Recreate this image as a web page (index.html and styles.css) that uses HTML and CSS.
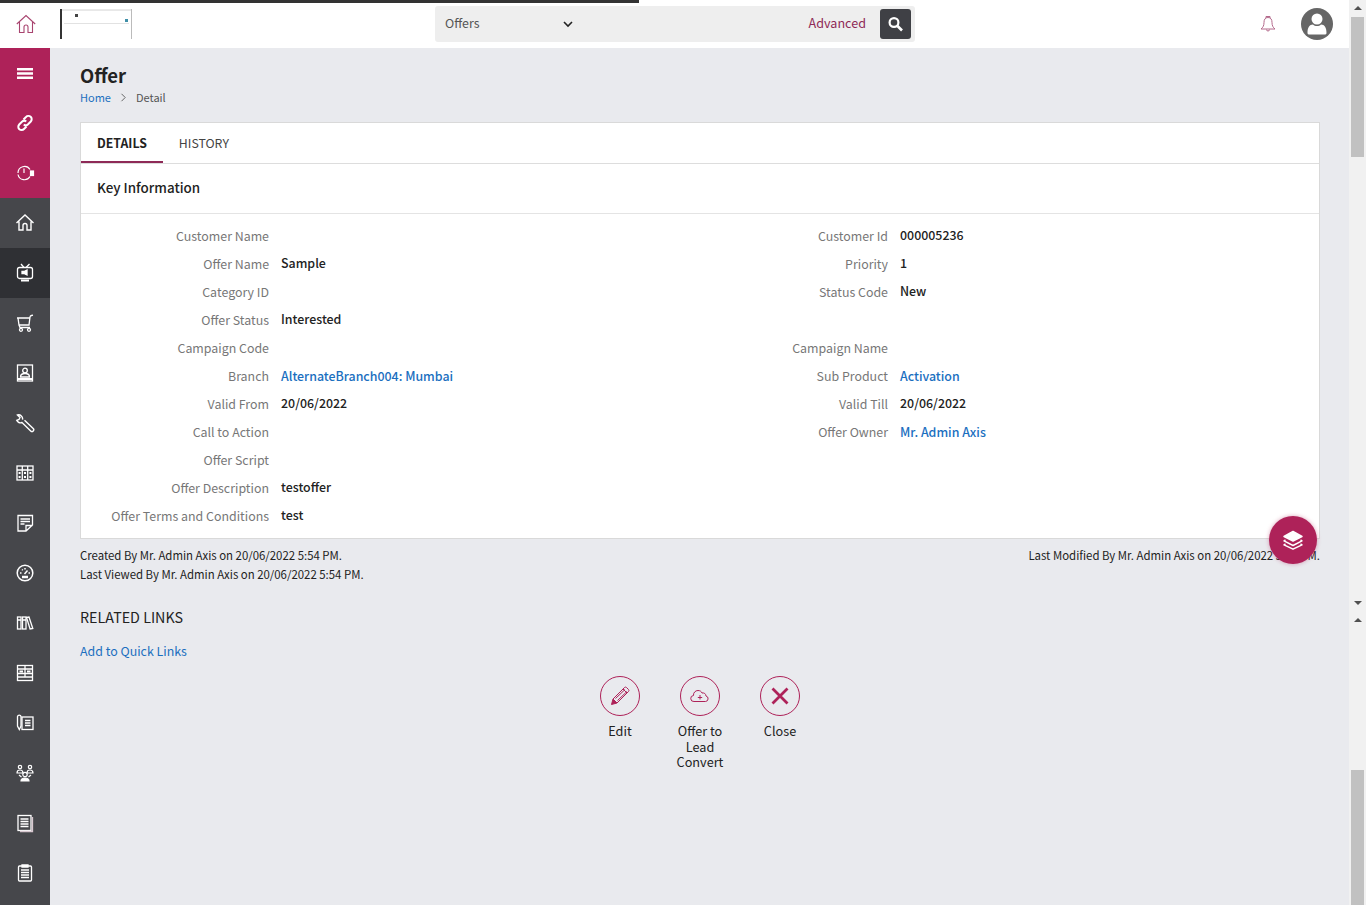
FILE: index.html
```html
<!DOCTYPE html>
<html lang="en">
<head>
  <meta charset="UTF-8" />
  <title>Offer</title>
  <link rel="stylesheet" href="styles.css">
</head>
<body>
  <div class="page">
    <div class="window">
      <header class="topbar">
        <div class="progress"></div>
        <a class="home-link">
          <svg width="20" height="20" viewBox="0 0 20 20" fill="none" stroke="#a8446f" stroke-width="1.100"><path d="M.8 10 10 1.500 19.200 10M3.500 8v10.500h4.500v-5.500a2 2 0 0 1 4 0v5.500h4.500V8"/></svg>
        </a>
        <div class="thumb"><span class="thumb-top"></span><span class="thumb-dot"></span><span class="thumb-line"></span><span class="thumb-mark"></span></div>
        <div class="search">
          <div class="search-select">
            <span class="search-text">Offers</span>
            <svg width="10" height="7" viewBox="0 0 10 7" fill="none" stroke="#222" stroke-width="1.600"><path d="M1 1l4 4 4-4"/></svg>
          </div>
          <a class="search-adv search-text">Advanced</a>
          <button class="search-btn">
            <svg width="16" height="16" viewBox="0 0 16 16" fill="none" stroke="#fff" stroke-width="2.200"><circle cx="6" cy="6.500" r="4.400"/><path d="M9.500 10l4.500 4.500" stroke-width="2.600"/></svg>
          </button>
        </div>
        <svg class="bell" width="16" height="18" viewBox="0 0 16 18" fill="none" stroke="#b46a8c" stroke-width="1"><path d="M6 3V1.500h4V3M8 2.500c-3 0-4 2.200-4 5 0 3-1 5-3 6.500h14c-2-1.500-3-3.500-3-6.500 0-2.800-1-5-4-5zM6.500 14.500a1.500 1.500 0 0 0 3 0"/></svg>
        <svg class="avatar" width="32" height="32" viewBox="0 0 32 32"><circle cx="16" cy="16" r="16" fill="#666"/><circle cx="16" cy="11" r="5.500" fill="#fff"/><path d="M6.500 25c0-5.500 2-8.500 5.500-8.500 1 1 2.500 1.500 4 1.500s3-.5 4-1.500c3.500 0 5.500 3 5.500 8.500 0 1-1 1.500-2 1.500H8.500c-1 0-2-.5-2-1.500z" fill="#fff"/></svg>
      </header>

      <div class="body-row">
        <nav class="sidebar">
          <a class="nav-item pink"><svg width="20" height="20" viewBox="0 0 20 20" fill="#fff"><rect x="2" y="5" width="16" height="2.500"/><rect x="2" y="9.250" width="16" height="2.500"/><rect x="2" y="13.500" width="16" height="2.500"/></svg></a>
          <a class="nav-item pink"><svg width="20" height="20" viewBox="0 0 20 20" fill="none" stroke="#fff" stroke-width="2"><path d="M8.500 6.500 11 4a3.200 3.200 0 0 1 4.800 4.500l-3 3a3 3 0 0 1-4 0"/><path d="M11.500 13.500 9 16a3.200 3.200 0 0 1-4.800-4.500l3-3a3 3 0 0 1 4 0"/></svg></a>
          <a class="nav-item pink"><svg width="20" height="20" viewBox="0 0 20 20" fill="none" stroke="#fff" stroke-width="1.200"><path d="M3 10a6.500 6.500 0 0 1 12-3.500M15 13.500a6.500 6.500 0 0 1-12-2"/><path d="M9 5.500V10"/><rect x="15.500" y="8" width="3" height="4.500" fill="#fff"/></svg></a>
          <a class="nav-item"><svg width="20" height="20" viewBox="0 0 20 20" fill="none" stroke="#fff" stroke-width="1.400"><path d="M1.500 10 10 2l8.500 8M4 8.500V17h4v-4.500a2 2 0 0 1 4 0V17h4V8.500"/></svg></a>
          <a class="nav-item active"><svg width="20" height="20" viewBox="0 0 20 20" fill="none" stroke="#fff" stroke-width="1.300"><path d="M6 1l3 3.500M14.500 1 11 4.500"/><rect x="2.500" y="4.500" width="15" height="11" rx="2"/><path d="M7 8.500h2l3-1.500v5L9 10.500H7z" fill="#fff"/><path d="M6 17.500h8" stroke-width="2"/></svg></a>
          <a class="nav-item"><svg width="20" height="20" viewBox="0 0 20 20" fill="none" stroke="#fff" stroke-width="1.300"><path d="M2 5h12.500M3 5l1 7h10l1-8c.1-.8.700-1.300 1.500-1.500l1.500-.3M4 12l1 2.500h10"/><circle cx="6" cy="16.800" r="1.500"/><circle cx="14" cy="16.800" r="1.500"/></svg></a>
          <a class="nav-item"><svg width="20" height="20" viewBox="0 0 20 20" fill="none" stroke="#fff" stroke-width="1.300"><rect x="2.500" y="2" width="15" height="16"/><circle cx="10" cy="7.500" r="2.300"/><path d="M5.500 14c0-2.500 2-3.500 4.500-3.500s4.500 1 4.500 3.500z"/><path d="M2.500 16h15" stroke-width="2"/></svg></a>
          <a class="nav-item"><svg width="20" height="20" viewBox="0 0 20 20" fill="none" stroke="#fff" stroke-width="1.400"><path d="M7.500 6.700a4 4 0 0 0-5-4.700l2.500 2.500-1 2-2.300.8A4 4 0 0 0 7 9.500l8.700 8.500a1.700 1.700 0 0 0 2.500-2.500L9.500 7.200"/></svg></a>
          <a class="nav-item"><svg width="20" height="20" viewBox="0 0 20 20" fill="none" stroke="#fff" stroke-width="1.300"><rect x="2" y="3" width="16" height="14"/><path d="M7.300 3v14M12.700 3v14M2 7h16"/><path d="M4.600 9v2M10 9v2M15.400 9v2M4.600 13v2M10 13v2M15.400 13v2" stroke-width="2"/></svg></a>
          <a class="nav-item"><svg width="20" height="20" viewBox="0 0 20 20" fill="none" stroke="#fff" stroke-width="1.300"><path d="M3 2.500h14.500V12L11 18H3zM11 18v-5.500h6.500"/><path d="M5.500 6h9.500M5.500 8.500h9.500M5.500 11h4"/></svg></a>
          <a class="nav-item"><svg width="20" height="20" viewBox="0 0 20 20" fill="none" stroke="#fff" stroke-width="1.500"><circle cx="10" cy="10" r="7.800"/><path d="M5 10h1.500M13.500 10H15M7 6.500l.8.8M10 5v1.500M9.500 11l3-3.500"/><path d="M7 14h6" stroke-width="2.500"/></svg></a>
          <a class="nav-item"><svg width="20" height="20" viewBox="0 0 20 20" fill="none" stroke="#fff" stroke-width="1.300"><rect x="2.500" y="4" width="3.500" height="12"/><rect x="7.500" y="4" width="3.500" height="12"/><path d="M11.500 4.500 14 4l3.800 11.500-2.700.5z"/><path d="M2.500 7h3.500M7.500 7h3.500"/></svg></a>
          <a class="nav-item"><svg width="20" height="20" viewBox="0 0 20 20" fill="none" stroke="#fff" stroke-width="1.300"><rect x="2.500" y="2.500" width="15" height="15"/><path d="M2.500 6h15M2.500 10.500h15M2.500 14h15M10 2.500V14"/><rect x="4.500" y="7.500" width="3.500" height="2" fill="#fff" stroke="none"/><rect x="12" y="7.500" width="3.500" height="2" fill="#fff" stroke="none"/></svg></a>
          <a class="nav-item"><svg width="20" height="20" viewBox="0 0 20 20" fill="none" stroke="#fff" stroke-width="1.300"><rect x="7" y="4" width="11" height="12.500"/><path d="M10 7.500h5.500M10 10h5.500M10 12.500h5.500"/><path d="M2.500 3.500a1.800 1.800 0 0 1 3.500 0V13l-1.700 3.500L2.500 13z" fill="#46474b"/></svg></a>
          <a class="nav-item"><svg width="20" height="20" viewBox="0 0 20 20" fill="none" stroke="#fff" stroke-width="1.200"><circle cx="5" cy="4" r="1.700"/><circle cx="15" cy="4" r="1.700"/><path d="M2 10c0-2 1-3 3-3s3 1 3 3zM12 10c0-2 1-3 3-3s3 1 3 3z"/><circle cx="10" cy="11.500" r="2.200"/><path d="M6 18c0-2 1.500-3 4-3s4 1 4 3z" fill="#fff"/><path d="M4 12l2.500 2M16 12l-2.500 2"/></svg></a>
          <a class="nav-item"><svg width="20" height="20" viewBox="0 0 20 20" fill="none" stroke="#fff" stroke-width="1.300"><rect x="3" y="2.500" width="13" height="15"/><path d="M5.500 6h8M5.500 8.500h8M5.500 11h8M5.500 13.500h8"/><path d="M17.500 4v14.500H5" stroke="#d8c8d0"/></svg></a>
          <a class="nav-item"><svg width="20" height="20" viewBox="0 0 20 20" fill="none" stroke="#fff" stroke-width="1.300"><rect x="3.500" y="3" width="13" height="15" rx="1"/><path d="M7 2h6v2H7z" fill="#fff"/><path d="M6 7h8M6 9.500h8M6 12h8M6 14.500h8"/></svg></a>
        </nav>

        <main class="main">
          <h1 class="title">Offer</h1>
          <div class="crumbs"><a class="link">Home</a><svg width="7" height="9" viewBox="0 0 7 9" fill="none" stroke="#666"><path d="M1.500 .8 5.200 4.500 1.500 8.200"/></svg><span>Detail</span></div>

          <section class="card">
            <div class="tabs">
              <a class="tab tab-on">DETAILS</a>
              <a class="tab">HISTORY</a>
            </div>
            <h2 class="card-head">Key Information</h2>
            <div class="fields">
              <div class="field"><label>Customer Name</label><span></span></div>
              <div class="field"><label>Customer Id</label><span>000005236</span></div>
              <div class="field"><label>Offer Name</label><span>Sample</span></div>
              <div class="field"><label>Priority</label><span>1</span></div>
              <div class="field"><label>Category ID</label><span></span></div>
              <div class="field"><label>Status Code</label><span>New</span></div>
              <div class="field"><label>Offer Status</label><span>Interested</span></div>
              <div class="field"></div>
              <div class="field"><label>Campaign Code</label><span></span></div>
              <div class="field"><label>Campaign Name</label><span></span></div>
              <div class="field"><label>Branch</label><span class="link">AlternateBranch004: Mumbai</span></div>
              <div class="field"><label>Sub Product</label><span class="link">Activation</span></div>
              <div class="field"><label>Valid From</label><span>20/06/2022</span></div>
              <div class="field"><label>Valid Till</label><span>20/06/2022</span></div>
              <div class="field"><label>Call to Action</label><span></span></div>
              <div class="field"><label>Offer Owner</label><span class="link">Mr. Admin Axis</span></div>
              <div class="field"><label>Offer Script</label><span></span></div>
              <div class="field"></div>
              <div class="field"><label>Offer Description</label><span>testoffer</span></div>
              <div class="field"></div>
              <div class="field"><label>Offer Terms and Conditions</label><span>test</span></div>
              <div class="field"></div>
            </div>
          </section>

          <div class="audit">
            <div>
              <p>Created By Mr. Admin Axis on 20/06/2022 5:54 PM.</p>
              <p>Last Viewed By Mr. Admin Axis on 20/06/2022 5:54 PM.</p>
            </div>
            <p>Last Modified By Mr. Admin Axis on 20/06/2022 5:54 PM.</p>
          </div>

          <h3 class="related">RELATED LINKS</h3>
          <a class="link quick">Add to Quick Links</a>

          <div class="actions">
            <div class="action">
              <span class="action-icon"><svg width="20" height="20" viewBox="0 0 20 20" fill="none" stroke="#ae2259" stroke-width="1"><path d="M14.500 1.500a1.500 1.500 0 0 1 2 0l2 2a1.500 1.500 0 0 1 0 2L7 17 3 13z"/><path d="M3 13 1.500 18.500 7 17z" fill="#ae2259"/><path d="M5.500 12.500 15 3.500M7.500 14.500 17 5.500M13 3l4 4"/></svg></span>
              <span class="action-name">Edit</span>
            </div>
            <div class="action">
              <span class="action-icon"><svg width="20" height="14" viewBox="0 0 20 14" fill="none" stroke="#ae2259" stroke-width="1"><path d="M5 12.500H4a3 3 0 0 1-.5-6A4.500 4.500 0 0 1 8 1.500c2 0 3.500 1 4 2.500a3.500 3.500 0 0 1 4 3 2.800 2.800 0 0 1-.5 5.500H5z"/><path d="M10 6v4.500M7.800 8.500h4.400"/></svg></span>
              <span class="action-name">Offer to Lead Convert</span>
            </div>
            <div class="action">
              <span class="action-icon"><svg width="20" height="20" viewBox="0 0 20 20" fill="none" stroke="#ae2259" stroke-width="2.800"><path d="M2.500 2.500l15 15M17.500 2.500l-15 15"/></svg></span>
              <span class="action-name">Close</span>
            </div>
          </div>

          <a class="fab"><svg width="22" height="20" viewBox="0 0 22 20" fill="none" stroke="#fff" stroke-width="1.500" stroke-linejoin="round"><path d="M11 1.500 20 6.500 11 11 2 6.500z" fill="#fff"/><path d="M3.500 10 2 10.800 11 15.500l9-4.700-1.500-.8"/><path d="M3.500 14 2 14.800 11 19.200l9-4.400-1.500-.8"/></svg></a>
        </main>
      </div>
    </div>

    <div class="scrolls">
      <div class="scroll scroll-top">
        <span class="arrow up"></span>
        <div class="track"><div class="thumb-bar bar-top"></div></div>
        <span class="arrow down"></span>
      </div>
      <div class="scroll scroll-bottom">
        <span class="arrow up"></span>
        <div class="track"><div class="thumb-bar bar-bottom"></div></div>
      </div>
    </div>
  </div>
</body>
</html>
```

FILE: styles.css
```css
html, body {
  margin: 0;
  height: 100%;
  overflow: hidden;
}
body {
  font-family: "Noto Sans CJK SC", "Noto Sans", sans-serif;
  font-size: 12.400px;
  color: #222;
  background: #e9eaee;
}
p, h1, h2, h3 {
  margin: 0;
}
.page {
  display: flex;
  height: 905px;
}
.window {
  flex: 1;
  display: flex;
  flex-direction: column;
  min-width: 0;
}

/* top bar */
.topbar {
  position: relative;
  height: 48px;
  flex: none;
  display: flex;
  align-items: center;
  background: #fff;
}
.progress {
  position: absolute;
  top: 0;
  left: 0;
  width: 639px;
  height: 3px;
  background: #333;
}
.home-link {
  width: 52px;
  display: flex;
  justify-content: center;
}
.thumb {
  position: relative;
  width: 72px;
  height: 30px;
  margin-left: 8px;
  box-sizing: border-box;
  background: #fff;
  border-left: 2px solid #333;
  border-right: 1px solid #bbb;
}
.thumb-top {
  position: absolute;
  left: 0;
  right: 0;
  top: 0;
  height: 2px;
  background: #e8e8e8;
}
.thumb-dot {
  position: absolute;
  left: 13px;
  top: 5px;
  width: 3px;
  height: 3px;
  background: #444;
}
.thumb-line {
  position: absolute;
  left: 2px;
  top: 14px;
  right: 2px;
  height: 1px;
  background: #e2e2e2;
}
.thumb-mark {
  position: absolute;
  right: 3px;
  top: 10px;
  width: 3px;
  height: 3px;
  background: #3f8fa8;
}
.search {
  display: flex;
  align-items: center;
  width: 480px;
  height: 36px;
  margin-left: 303px;
  padding-right: 4px;
  box-sizing: border-box;
  background: #eee;
  border-radius: 3px;
}
.search-select {
  display: flex;
  align-items: center;
  justify-content: space-between;
  width: 138px;
  padding-left: 10px;
  box-sizing: border-box;
  color: #555;
}
.search-text {
  padding-bottom: 2px;
}
.search-adv {
  margin-left: auto;
  margin-right: 14px;
  padding-bottom: 3px;
  font-size: 12.600px;
  color: #8e2a57;
}
.search-btn {
  width: 31px;
  height: 30px;
  padding: 0;
  display: flex;
  align-items: center;
  justify-content: center;
  background: #3f4045;
  border: none;
  border-radius: 3px;
}
.bell {
  margin-left: 345px;
}
.avatar {
  margin-left: 25px;
}

/* sidebar */
.body-row {
  flex: 1;
  display: flex;
  min-height: 0;
}
.sidebar {
  width: 50px;
  flex: none;
  background: #46474b;
}
.nav-item {
  height: 50px;
  display: flex;
  align-items: center;
  justify-content: center;
}
.pink {
  background: #ae2259;
}
.active {
  background: #2f3034;
}

/* main area */
.main {
  position: relative;
  flex: 1;
  min-width: 0;
  padding: 15px 29px 0 30px;
}
.title {
  font-size: 18.500px;
  font-weight: 700;
  line-height: 24px;
  color: #222;
}
.crumbs {
  display: flex;
  align-items: center;
  gap: 9px;
  height: 20px;
  font-size: 11px;
  color: #555;
}
.link {
  color: #1b6fbf;
}
.card {
  margin-top: 15px;
  height: 417px;
  box-sizing: border-box;
  background: #fff;
  border: 1px solid #d9d9d9;
}
.tabs {
  display: flex;
  height: 41px;
  box-sizing: border-box;
  border-bottom: 1px solid #ddd;
}
.tab {
  padding: 0 16px;
  height: 40px;
  box-sizing: border-box;
  line-height: 40px;
  font-size: 12.300px;
  color: #444;
}
.tab-on {
  font-weight: 700;
  color: #222;
  border-bottom: 2px solid #8e2a57;
}
.card-head {
  height: 50px;
  box-sizing: border-box;
  padding-left: 16px;
  line-height: 46px;
  font-size: 13.400px;
  font-weight: 500;
  border-bottom: 1px solid #e4e4e4;
}
.fields {
  display: grid;
  grid-template-columns: 1fr 1fr;
  padding-top: 8px;
}
.field {
  display: flex;
  height: 28px;
  align-items: center;
  gap: 12px;
}
.field label {
  width: 188px;
  flex: none;
  text-align: right;
  color: #777;
}
.field span {
  position: relative;
  top: -1px;
  font-weight: 500;
}
.field span.link {
  top: 0;
}
.audit {
  display: flex;
  justify-content: space-between;
  margin-top: 7px;
  font-size: 11.400px;
  line-height: 19px;
}
.related {
  margin-top: 23px;
  font-size: 14.300px;
  font-weight: 400;
  line-height: 20px;
}
.quick {
  display: block;
  margin-top: 14px;
  line-height: 20px;
}
.actions {
  display: flex;
  justify-content: center;
  margin-top: 15px;
}
.action {
  width: 80px;
  display: flex;
  flex-direction: column;
  align-items: center;
  text-align: center;
  font-size: 12.700px;
  line-height: 15.500px;
}
.action-name {
  width: 60px;
  margin-top: 7px;
}
.action-icon {
  width: 40px;
  height: 40px;
  box-sizing: border-box;
  display: flex;
  align-items: center;
  justify-content: center;
  border: 1px solid #ae2259;
  border-radius: 50%;
}
.fab {
  position: absolute;
  left: 1219px;
  top: 468px;
  width: 48px;
  height: 48px;
  display: flex;
  align-items: center;
  justify-content: center;
  background: #ae2259;
  border-radius: 50%;
  box-shadow: 0 0 4px rgba(174, 34, 89, 0.4);
}

/* the two browser scrollbars */
.scrolls {
  width: 17px;
  flex: none;
  display: flex;
  flex-direction: column;
  background: #f1f1f1;
}
.scroll {
  display: flex;
  flex-direction: column;
  align-items: center;
}
.scroll-top {
  height: 612px;
}
.scroll-bottom {
  flex: 1;
}
.track {
  flex: 1;
  width: 100%;
  display: flex;
  flex-direction: column;
  align-items: center;
}
.thumb-bar {
  width: 13px;
  background: #c1c1c1;
}
.bar-top {
  height: 140px;
}
.bar-bottom {
  height: 135px;
  margin-top: 141px;
}
.arrow {
  flex: none;
  width: 0;
  height: 0;
  margin: 6px 0 7px;
  border-left: 4px solid transparent;
  border-right: 4px solid transparent;
}
.arrow.up {
  border-bottom: 4px solid #505050;
}
.arrow.down {
  border-top: 4px solid #505050;
  margin: 7px 0 7px;
}
```
